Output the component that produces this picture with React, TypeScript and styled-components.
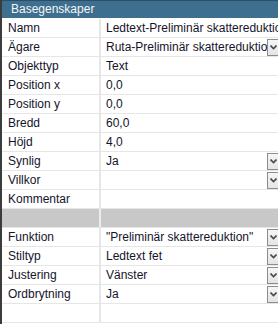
import React from "react";
import styled, { createGlobalStyle } from "styled-components";

const Global = createGlobalStyle`
    html, body {
        margin: 0;
        padding: 0;
        background: #ffffff;
        overflow: hidden;
    }
`;

type Row = { label?: string; value?: string; combo?: boolean; section?: boolean };

const rows: Row[] = [
    { label: "Namn", value: "Ledtext-Preliminär skattereduktion" },
    { label: "Ägare", value: "Ruta-Preliminär skattereduktion", combo: true },
    { label: "Objekttyp", value: "Text" },
    { label: "Position x", value: "0,0" },
    { label: "Position y", value: "0,0" },
    { label: "Bredd", value: "60,0" },
    { label: "Höjd", value: "4,0" },
    { label: "Synlig", value: "Ja", combo: true },
    { label: "Villkor", value: "", combo: true },
    { label: "Kommentar", value: "" },
    { section: true },
    { label: "Funktion", value: "\"Preliminär skattereduktion\"", combo: true },
    { label: "Stiltyp", value: "Ledtext fet", combo: true },
    { label: "Justering", value: "Vänster", combo: true },
    { label: "Ordbrytning", value: "Ja", combo: true },
    { label: "", value: "" },
];

function Chevron() {
    return (
        <svg width="7" height="5" viewBox="0 0 7 5">
            <path d="M0.5 0.5 L3.5 3.5 L6.5 0.5" fill="none" stroke="#4a4a4a" strokeWidth="1.6" />
        </svg>
    );
}

export default function App() {
    return (
        <Panel>
            <Global />
            <Header>Basegenskaper</Header>
            {rows.map((r, i) => (
                <GridRow key={i} $section={r.section}>
                    <Label>{r.label}</Label>
                    <Value>
                        <ValueText>{r.value}</ValueText>
                        {r.combo && <DropButton><Chevron /></DropButton>}
                    </Value>
                </GridRow>
            ))}
        </Panel>
    );
}

const Panel = styled.div`
    width: 278px;
    height: 324px;
    box-sizing: border-box;
    border-left: 2px solid #3c3c3c;
    font-family: "Liberation Sans", Arial, sans-serif;
    font-size: 12px;
    color: #14142b;
    overflow: hidden;
`;

const Header = styled.div`
    height: 18px;
    box-sizing: border-box;
    border-top: 1px solid #2c4f66;
    background: #3e6f8f;
    color: #f2f6f9;
    padding-left: 9px;
    line-height: 17px;
    margin-bottom: 1px;
`;

const GridRow = styled.div<{ $section?: boolean }>`
    display: grid;
    grid-template-columns: 99px 1fr;
    height: 19px;
    box-sizing: border-box;
    border-bottom: 1px solid #e6e6e6;
    background: ${(p) => (p.$section ? "#c8c8c8" : "#ffffff")};
    column-gap: 0;

    & > div:first-child {
        border-right: 2px solid ${(p) => (p.$section ? "#ededed" : "#e6e6e6")};
    }
`;

const Label = styled.div`
    padding-left: 6px;
    line-height: 18px;
    white-space: nowrap;
    overflow: hidden;
`;

const Value = styled.div`
    display: flex;
    align-items: center;
    min-width: 0;
    overflow: hidden;
`;

const ValueText = styled.span`
    flex: 1;
    padding-left: 5px;
    white-space: nowrap;
    overflow: hidden;
    line-height: 18px;
`;

const DropButton = styled.div`
    flex: none;
    width: 14px;
    height: 17px;
    box-sizing: border-box;
    border: 1px solid #8c8c8c;
    background: linear-gradient(#f6f6f6, #e4e4e4);
    display: flex;
    align-items: center;
    justify-content: flex-start;
    padding-left: 2px;
    margin-right: -3px;
`;
